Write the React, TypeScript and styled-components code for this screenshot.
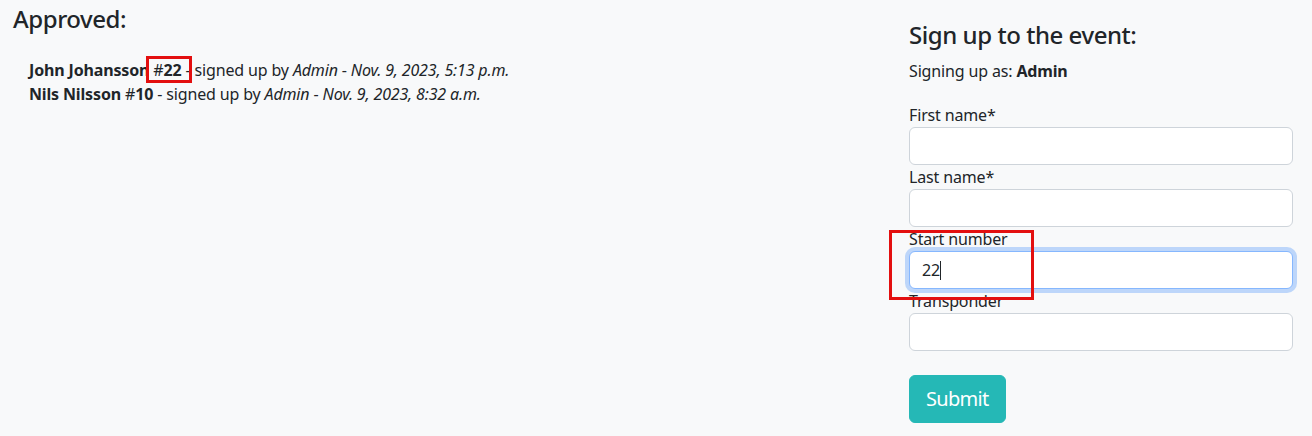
import React from "react";
import styled, { createGlobalStyle } from "styled-components";

const Global = createGlobalStyle`
  html, body { margin: 0; padding: 0; background: #f8f9fa; }
  body {
    font-family: "Segoe UI", "Noto Sans", "Open Sans", sans-serif;
    font-size: 16px;
    line-height: 1.5;
    letter-spacing: -0.15px;
    color: #212529;
  }
  * { box-sizing: border-box; }
`;

const Page = styled.div`
  display: flex;
  width: 1312px;
  height: 436px;
  overflow: hidden;
  background: #f8f9fa;
`;

const LeftCol = styled.section`
  flex: 1;
  padding: 5px 0 0 13px;
`;

const RightCol = styled.section`
  width: 403px;
  padding: 21px 19px 0 0;
`;

const Heading = styled.h4`
  margin: 0;
  font-size: 24px;
  font-weight: 500;
  line-height: 1.2;
  letter-spacing: -0.45px;
`;

const SignupList = styled.ul`
  list-style: none;
  margin: 24px 0 0;
  padding: 0 0 0 16px;
`;

const Item = styled.li`
  line-height: 24px;
`;

const Marked = styled.span`
  position: relative;
  &::after {
    content: "";
    position: absolute;
    left: -7px;
    right: -10px;
    top: -3px;
    bottom: -2px;
    border: 3px solid #e30f0f;
    pointer-events: none;
  }
`;

const SigningAs = styled.p`
  margin: 9px 0 20px;
`;

const Field = styled.div`
  position: relative;
  display: flex;
  flex-direction: column;
`;

const Label = styled.label`
  line-height: 24px;
`;

const Input = styled.input<{ $focus?: boolean }>`
  height: 38px;
  width: 100%;
  padding: 6px 12px;
  font: inherit;
  font-size: 16px;
  color: #212529;
  background: #fff;
  border: 1px solid ${(p) => (p.$focus ? "#86b7fe" : "#ced4da")};
  border-radius: 6px;
  outline: none;
  box-shadow: ${(p) => (p.$focus ? "0 0 0 4px rgba(13,110,253,0.25)" : "none")};
`;

const Caret = styled.span`
  display: inline-block;
  width: 1px;
  height: 19px;
  background: #212529;
  vertical-align: -4px;
`;

const FakeInputValue = styled.div`
  position: absolute;
  left: 13px;
  top: 31px;
  line-height: 24px;
  pointer-events: none;
`;

const Annotation = styled.div`
  position: absolute;
  left: -20px;
  top: 3px;
  width: 145px;
  height: 70px;
  border: 3px solid #e30f0f;
  pointer-events: none;
  z-index: 2;
`;

const SubmitButton = styled.button`
  margin-top: 24px;
  height: 48px;
  padding: 8px 16px;
  font: inherit;
  font-size: 20px;
  line-height: 30px;
  letter-spacing: -0.7px;
  color: #fff;
  background: #25b8b6;
  border: 1px solid #25b8b6;
  border-radius: 6px;
`;

export default function App() {
  return (
    <>
      <Global />
      <Page>
        <LeftCol>
          <Heading>Approved:</Heading>
          <SignupList>
            <Item>
              <b>John Johansson</b> <Marked>#<b>22</b></Marked> - signed up by <i>Admin</i> -{" "}
              <i>Nov. 9, 2023, 5:13 p.m.</i>
            </Item>
            <Item>
              <b>Nils Nilsson</b> #<b>10</b> - signed up by <i>Admin</i> -{" "}
              <i>Nov. 9, 2023, 8:32 a.m.</i>
            </Item>
          </SignupList>
        </LeftCol>
        <RightCol>
          <Heading>Sign up to the event:</Heading>
          <SigningAs>
            Signing up as: <b>Admin</b>
          </SigningAs>
          <Field>
            <Label>First name*</Label>
            <Input />
          </Field>
          <Field>
            <Label>Last name*</Label>
            <Input />
          </Field>
          <Field>
            <Label>Start number</Label>
            <Input $focus />
            <FakeInputValue>
              22<Caret />
            </FakeInputValue>
            <Annotation />
          </Field>
          <Field>
            <Label>Transponder</Label>
            <Input />
          </Field>
          <SubmitButton>Submit</SubmitButton>
        </RightCol>
      </Page>
    </>
  );
}
